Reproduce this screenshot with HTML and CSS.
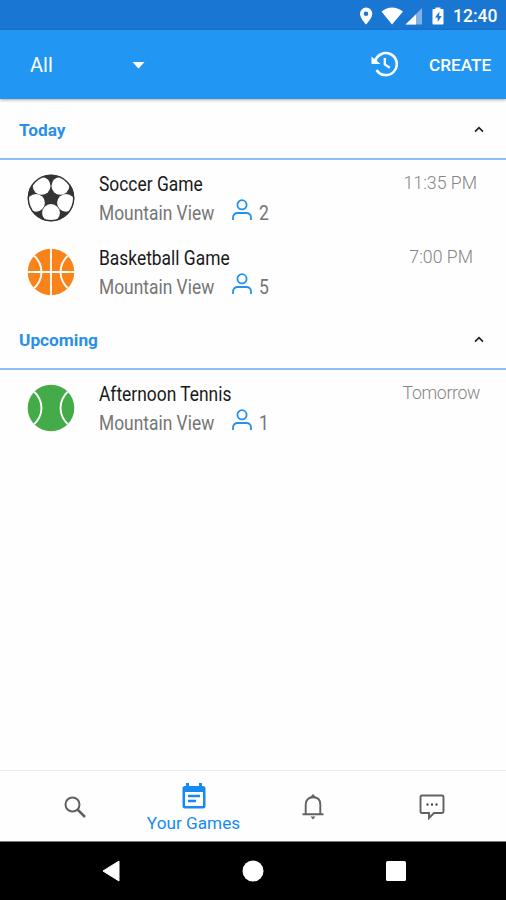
FILE: index.html
```html
<!DOCTYPE html>
<html lang="en">
<head>
<meta charset="utf-8">
<title>Your Games</title>
<link rel="stylesheet" href="styles.css">
</head>
<body>
<svg class="defs" width="0" height="0">
  <symbol id="person" viewBox="0 0 20 22"><circle cx="10" cy="5.8" r="4.6"/><path d="M1 21v-2.5c0-2.7 2-4.5 4.7-4.5h8.6c2.7 0 4.7 1.8 4.7 4.5V21"/></symbol>
  <symbol id="chevron" viewBox="0 0 10 7"><path d="M1 5.7 5 1.7 9 5.7"/></symbol>
</svg>
<div class="phone">
  <header class="status">
    <svg class="status-icons" viewBox="0 0 90 24">
      <path fill="#fff" fill-rule="evenodd" d="M6 3.500a6.300 6.300 0 0 0-6 6.200C0 14.200 6 20.500 6 20.500s6.300-6.300 6.300-10.800A6.300 6.300 0 0 0 6 3.500Zm0 4a2.300 2.300 0 1 1 0 4.600 2.300 2.300 0 0 1 0-4.600Z"/>
      <path fill="#fff" d="M21.500 7.500Q32 -.500 43 7.500L32 20.500Z"/>
      <path fill="#82b2e4" d="M62 4v16.500H45.500Z"/>
      <path fill="#fff" d="M56 10.500v10H45.500Z"/>
      <path fill="#fff" d="M75.500 3.500h5V5h2q1 0 1 1v13.500q0 1-1 1h-9q-1 0-1-1V6q0-1 1-1h2Z"/>
      <path fill="#1976d2" d="m79.500 7.500-4.500 6h2.700v4.500l4-6h-2.600Z"/>
    </svg>
    <span class="clock">12:40</span>
  </header>
  <div class="appbar">
    <span class="filter">All</span>
    <svg class="caret" viewBox="0 0 12 7"><path d="M0 0h12L6 6.500Z"/></svg>
    <svg class="history" viewBox="0 0 27 26"><path d="M4 11A11 11 0 1 1 5.500 19" fill="none" stroke="#fff" stroke-width="2.600"/><path d="M.5 5.500V13H9.500Z" fill="#fff"/><path d="M13.800 7v6.500l5 3.300" fill="none" stroke="#fff" stroke-width="2.300"/></svg>
    <span class="create">CREATE</span>
  </div>
  <main>
    <section>
      <h2><span class="today">Today</span><svg class="chevron"><use href="#chevron"/></svg></h2>
      <article>
        <svg class="ball" viewBox="0 0 48 48">
          <clipPath id="round"><circle cx="24" cy="24" r="23.300"/></clipPath>
          <circle cx="24" cy="24" r="23.300" fill="#333436"/>
          <g clip-path="url(#round)" fill="#fff">
            <circle cx="14.600" cy="11.900" r="8.900"/><circle cx="33.400" cy="11.900" r="8.900"/><circle cx="9" cy="28.800" r="8.900"/><circle cx="39" cy="28.800" r="8.900"/><circle cx="24" cy="39" r="8.900"/>
          </g>
          <circle cx="24" cy="24" r="22.700" fill="none" stroke="#333436" stroke-width="1.400"/>
          <path fill="#333436" d="m24 17.500 6.500 4.800-2.500 7.700h-8l-2.500-7.700Z"/>
        </svg>
        <div class="info"><h3 class="soccer">Soccer Game</h3><p><span class="place">Mountain View</span><svg class="person"><use href="#person"/></svg><span class="count">2</span></p></div>
        <time class="t1">11:35 PM</time>
      </article>
      <article>
        <svg class="ball" viewBox="0 0 48 48"><circle cx="24" cy="24" r="23.300" fill="#f98318"/><g clip-path="url(#round)" fill="none" stroke="#fff" stroke-width="1.900"><path d="M24 0v48M0 24h48M5.500 6Q14.500 14 14.500 24T5.500 42M42.500 6Q33.500 14 33.500 24t9 18"/></g></svg>
        <div class="info"><h3 class="basket">Basketball Game</h3><p><span class="place">Mountain View</span><svg class="person"><use href="#person"/></svg><span class="count">5</span></p></div>
        <time class="t2">7:00 PM</time>
      </article>
    </section>
    <section>
      <h2><span class="upcoming">Upcoming</span><svg class="chevron"><use href="#chevron"/></svg></h2>
      <article>
        <svg class="ball" viewBox="0 0 48 48"><circle cx="24" cy="24" r="23.300" fill="#43ab47"/><g clip-path="url(#round)" fill="none" stroke="#fff" stroke-width="1.900"><path d="M5.500 6Q14.500 14 14.500 24T5.500 42M42.500 6Q33.500 14 33.500 24t9 18"/></g></svg>
        <div class="info"><h3 class="tennis">Afternoon Tennis</h3><p><span class="place">Mountain View</span><svg class="person"><use href="#person"/></svg><span class="count">1</span></p></div>
        <time class="t3">Tomorrow</time>
      </article>
    </section>
  </main>
  <nav class="tabs">
    <div><svg width="22" height="22" viewBox="0 0 22 22" fill="none" stroke="#616161"><circle cx="8.500" cy="8.500" r="7" stroke-width="2"/><path d="m13.500 13.500 7.500 7.500" stroke-width="2.500"/></svg></div>
    <div class="active"><svg width="24" height="26" viewBox="0 0 24 26"><path fill="#168af2" fill-rule="evenodd" d="M4 0h3v3h10V0h3v3h1q2.500 0 2.500 2.500V23q0 2.500-2.500 2.500H3Q.500 25.500.500 23V5.500Q.500 3 3 3h1ZM3 9v14h18V9Z"/><path d="M6 13h12M6 18h8" stroke="#168af2" stroke-width="2.300"/></svg><span>Your Games</span></div>
    <div><svg width="22" height="26" viewBox="0 0 22 26" fill="none" stroke="#616161" stroke-width="1.900"><path d="M3.700 20V10.500C3.700 6 6.500 3.300 11 3.300s7.300 2.700 7.300 7.200V20M.5 20.300h21"/><path d="M8 3.300 11 0l3 3.300ZM8.500 22.500h5L11 25.500Z" fill="#616161" stroke="none"/></svg></div>
    <div><svg width="26" height="26" viewBox="0 0 26 26" fill="none" stroke="#616161" stroke-width="1.900"><path d="M3 1.500h20q1.500 0 1.500 1.500v14.500q0 1.500-1.500 1.500h-8L10 24v-5H3q-1.500 0-1.500-1.500V3Q1.500 1.500 3 1.500Z"/><path d="M7.500 10.500h2M12 10.500h2M16.500 10.500h2" stroke="#333" stroke-width="2"/></svg></div>
  </nav>
  <footer class="system">
    <svg width="18" height="22" viewBox="0 0 18 22"><path d="M17 1v20L1 11Z" fill="#fff" stroke="#fff" stroke-linejoin="round"/></svg>
    <svg width="22" height="22" viewBox="0 0 22 22"><circle cx="11" cy="11" r="10.500" fill="#fff"/></svg>
    <svg width="20" height="20" viewBox="0 0 20 20"><rect width="20" height="20" rx="1.500" fill="#fff"/></svg>
  </footer>
</div>
</body>
</html>
```
FILE: styles.css
```css
* { box-sizing: border-box; margin: 0; }
body { font-family: Roboto, "Liberation Sans", sans-serif; background: #fefefe; }
.defs { position: absolute; }
svg { flex: none; }
.phone { height: 900px; display: flex; flex-direction: column; overflow: hidden; }
.status { height: 30px; flex: none; background: #1976d2; display: flex; align-items: center; justify-content: flex-end; padding: 2px 9px 0 0; color: #fff; }
.status-icons { width: 90px; height: 24px; margin-right: 3px; }
.clock { width: 44px; font-size: 17.5px; font-weight: 500; white-space: nowrap; }
.appbar { height: 69px; flex: none; background: #2196f3; display: flex; align-items: center; padding: 1px 14px 0 30px; color: #fff; box-shadow: 0 1px 3px #0005; }
.filter { width: 102px; font-size: 20px; }
.caret { width: 13px; height: 7px; fill: #fff; }
.history { width: 27px; height: 26px; margin-left: auto; margin-right: 31px; margin-top: -3px; }
.create { width: 63px; font-size: 17.2px; font-weight: 500; white-space: nowrap; }
main { flex: 1; }
section { padding-bottom: 1px; }
h2 { height: 61px; border-bottom: 2px solid #8bc1f0; display: flex; align-items: center; justify-content: space-between; padding: 3px 22px 0 19px; font-size: 17.3px; font-weight: 700; color: #2b8fe8; }
.chevron { width: 10px; height: 7px; fill: none; stroke: #222; stroke-width: 1.7; margin-top: -2px; }
article { height: 74px; display: flex; align-items: flex-start; }
.ball { width: 48px; height: 48px; margin: 14px 24px 0 27px; }
.info { flex: 1; padding-top: 12px; }
h3, .place, .count, time { display: block; white-space: nowrap; width: max-content; transform-origin: left; }
h3 { font-size: 19.5px; line-height: 24px; font-weight: 400; color: #191919; transform: translateY(.6px) scaleX(.892); }
.info p { display: flex; height: 30px; margin-top: 3px; font-size: 19.5px; line-height: 30px; color: #757575; }
.place { width: 133px; transform: scaleX(.892); }
.person { width: 20px; height: 22px; margin-top: 0; fill: none; stroke: #2590ee; stroke-width: 1.8; }
.count { margin-left: 7px; transform: scaleX(.9); }
time { font-size: 17.7px; font-weight: 300; line-height: 22px; color: #858585; padding-top: 11px; transform: translateY(.5px); }
.t1 { margin-right: 29px; }
.t2 { margin-right: 33px; }
.t3 { margin-right: 26px; letter-spacing: -.35px; }
.tabs { height: 71px; flex: none; border-top: 1px solid #ececec; display: flex; padding: 0 15px; }
.tabs div { flex: 1; display: flex; flex-direction: column; align-items: center; justify-content: center; padding-top: 2px; }
.tabs .active { font-size: 17.2px; line-height: 22px; color: #168af2; white-space: nowrap; gap: 3px; padding-top: 5px; }
.system { height: 59px; flex: none; background: #000; border-top: 1px solid #777; display: flex; align-items: center; justify-content: space-between; padding: 0 100px 0 102px; }
```
